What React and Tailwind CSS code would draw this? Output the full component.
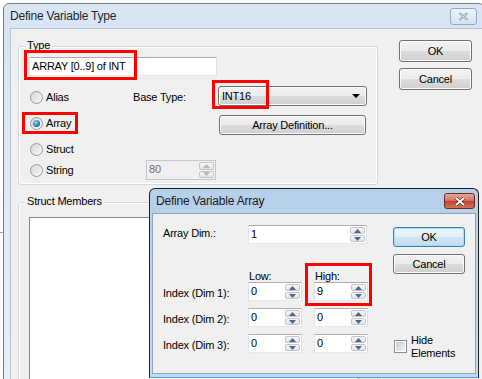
import React from 'react';

const FACE = 'rounded-[3px] border border-[#707070] bg-[linear-gradient(#f2f2f2,#ebebeb_50%,#dddddd_50%,#cfcfcf)] shadow-[inset_0_0_0_1px_#fbfbfb]';
const BTN = `flex items-center justify-center ${FACE}`;
const BTN_DEFAULT = 'flex items-center justify-center rounded-[3px] border border-[#3c7fb1] bg-[linear-gradient(#edf5fb,#e2eef7_50%,#d2e4f1_50%,#c5dbec)] shadow-[inset_0_0_0_1px_#a9dcf7]';
const TEXTBOX = 'border border-[#abadb3] border-l-[#e2e3ea] border-r-[#dbdfe6] border-b-[#e3e9ef] bg-white';
const RED = 'absolute border-[3px] border-[#ff0000] pointer-events-none';

const Tri = ({ up, color, w = 7, h = 4 }) => (
    <svg width={w} height={h} viewBox={`0 0 ${w} ${h}`}>
        <path d={up ? `M0 ${h} L${w / 2} 0 L${w} ${h} Z` : `M0 0 L${w} 0 L${w / 2} ${h} Z`} fill={color} />
    </svg>
);

const Spin = ({ className = '', value, disabled }) => (
    <div className={`flex h-[19px] ${disabled ? 'border border-[#c4c7cb] bg-[#f0f0f0] text-[#6d6d6d]' : TEXTBOX} ${className}`}>
        <div className="flex-1 pl-[2px] leading-[17px]">{value}</div>
        <div className="w-[16px] flex flex-col gap-px py-px pr-px">
            <div className="flex-1 flex items-center justify-center rounded-[2px] border border-[#c3c6cb] bg-linear-to-b from-[#f7f7f7] to-[#e0e3e7]">
                <Tri up color={disabled ? '#b8b8b8' : '#4e6591'} />
            </div>
            <div className="flex-1 flex items-center justify-center rounded-[2px] border border-[#c3c6cb] bg-linear-to-b from-[#f7f7f7] to-[#e0e3e7]">
                <Tri color={disabled ? '#b8b8b8' : '#4e6591'} />
            </div>
        </div>
    </div>
);

const Radio = ({ checked, label }) => (
    <div className="flex items-center gap-[3px]">
        <span className="w-[13px] h-[13px] rounded-full border border-[#9a9a9a] bg-linear-to-br from-[#d6d6d6] to-[#fafafa] flex items-center justify-center">
            {checked && <span className="w-[7px] h-[7px] rounded-full bg-[radial-gradient(circle_at_40%_35%,#8fdcff,#1c64a8_70%)]" />}
        </span>
        <span>{label}</span>
    </div>
);

const Group = ({ title, className = '', children }) => (
    <div className={`relative border border-[#cfd9e0] rounded-[3px] shadow-[inset_0_0_0_1px_#ffffff] ${className}`}>
        <span className="absolute left-[6px] -top-[8px] px-[2px] bg-[#f0f0f0] leading-[13px]">{title}</span>
        {children}
    </div>
);

export default function App() {
    return (
        <div className="relative w-[482px] h-[379px] overflow-hidden bg-white font-['Liberation_Sans',sans-serif] text-[11px] leading-[13px] tracking-[-0.2px] text-black">
            {/* app behind */}
            <div className="absolute left-0 top-[232px] w-[3px] h-px bg-[#a0a0a0]" />

            {/* Define Variable Type */}
            <div className="absolute left-[3px] top-[3px] w-[482px] h-[400px] flex flex-col border border-[#7a7a7a] rounded-t-[6px] bg-linear-to-b from-[#d9e5f3] to-[#e9eef4]">
                <div className="h-[24px] flex items-center pl-[6px] pr-[7px]">
                    <span className="text-[12px] text-[#252525]">Define Variable Type</span>
                    <div className="ml-auto w-[27px] h-[17px] rounded-[3px] border border-[#97a9c0] bg-linear-to-b from-[#eef3f9] to-[#d7e2ef] flex items-center justify-center">
                        <svg width="11" height="9" viewBox="0 0 11 9">
                            <path d="M1.5 1 L9.5 8 M9.5 1 L1.5 8" stroke="#8d96a3" strokeWidth="2.2" />
                            <path d="M1.5 1 L9.5 8 M9.5 1 L1.5 8" stroke="#f6f8fb" strokeWidth="0.8" />
                        </svg>
                    </div>
                </div>

                <div className="flex-1 ml-[6px] flex border-l border-t border-[#b4c2d3] bg-[#f0f0f0]">
                    <div className="ml-[7px] pt-[17px] w-[360px] flex flex-col">
                        <Group title="Type" className="h-[139px] pl-[11px]">
                            <div className={`mt-[10px] -ml-[1px] w-[188px] h-[19px] pl-[2px] leading-[17px] ${TEXTBOX}`}>ARRAY [0..9] of INT</div>

                            <div className="mt-[10px] h-[20px] flex items-center">
                                <div className="w-[103px] pt-[2px]"><Radio label="Alias" /></div>
                                <div className="w-[85px] pt-[2px]">Base Type:</div>
                                <div className={`w-[149px] h-[20px] pl-[3px] pr-[6px] flex items-center justify-between ${FACE}`}>
                                    <span>INT16</span>
                                    <Tri color="#000" w={8} h={4} />
                                </div>
                            </div>

                            <div className="mt-[9px] h-[20px] flex items-center">
                                <div className="w-[103px] -mt-[3px]"><Radio checked label="Array" /></div>
                                <div className={`ml-[86px] w-[147px] h-[20px] ${BTN}`}>Array Definition...</div>
                            </div>

                            <div className="mt-[4px] h-[20px] flex items-center">
                                <Radio label="Struct" />
                            </div>

                            <div className="mt-[1px] h-[20px] flex items-center">
                                <div className="w-[103px]"><Radio label="String" /></div>
                                <Spin className="ml-[13px] w-[70px] h-[20px]" value="80" disabled />
                            </div>

                            <div className={`${RED} left-[5px] top-[3px] w-[113px] h-[30px]`} />
                            <div className={`${RED} left-[193px] top-[33px] w-[57px] h-[29px]`} />
                            <div className={`${RED} left-[3px] top-[65px] w-[56px] h-[22px]`} />
                        </Group>

                        <Group title="Struct Members" className="mt-[17px] h-[200px] pl-[10px] pt-[14px]">
                            <div className="w-[330px] h-[200px] border border-[#828790] bg-white" />
                        </Group>
                    </div>

                    <div className="ml-[21px] pt-[11px] flex flex-col gap-[6px]">
                        <div className={`w-[73px] h-[22px] ${BTN}`}>OK</div>
                        <div className={`w-[73px] h-[22px] ${BTN}`}>Cancel</div>
                    </div>
                </div>
            </div>

            {/* Define Variable Array */}
            <div className="absolute left-[149px] top-[188px] w-[330px] h-[190px] flex flex-col border border-[#1f1f1f] border-b-[#35a7df] rounded-t-[6px] bg-linear-to-b from-[#b6cfea] to-[#c7daef]">
                <div className="h-[24px] flex items-center pl-[6px] pr-[3px]">
                    <span className="text-[12px] text-[#1b1b1b]">Define Variable Array</span>
                    <div className="ml-auto w-[31px] h-[16px] rounded-[3px] border border-[#6a2a20] bg-[linear-gradient(#e9a99a,#d46f5a_50%,#c0402a_50%,#d3735c)] flex items-center justify-center">
                        <svg width="12" height="9" viewBox="0 0 12 9">
                            <path d="M2 1 L10 8 M10 1 L2 8" stroke="#5a1f17" strokeWidth="3" />
                            <path d="M2 1 L10 8 M10 1 L2 8" stroke="#ffffff" strokeWidth="1.8" />
                        </svg>
                    </div>
                </div>

                <div className="relative flex-1 ml-[2px] mr-[2px] mb-[3px] flex border border-[#8fa3ba] bg-[#f0f0f0]">
                    <div className="pl-[10px] flex flex-col w-[215px]">
                        <div className="mt-[11px] h-[19px] flex items-center">
                            <span className="w-[85px] -mt-[3px]">Array Dim.:</span>
                            <Spin className="w-[119px]" value="1" />
                        </div>

                        <div className="mt-[26px] h-[12px] flex items-center">
                            <span className="w-[86px]" />
                            <span className="w-[66px]">Low:</span>
                            <span>High:</span>
                        </div>

                        {[['1', '9'], ['2', '0'], ['3', '0']].map(([d, hi], i) => (
                            <div key={d} className={`${i === 0 ? 'mt-0' : 'mt-[7px]'} h-[19px] flex items-center`}>
                                <span className="w-[85px] pt-[3px]">Index (Dim {d}):</span>
                                <Spin className="w-[54px]" value="0" />
                                <Spin className="ml-[12px] w-[54px]" value={hi} />
                            </div>
                        ))}
                    </div>

                    <div className="ml-[25px] flex flex-col">
                        <div className={`mt-[13px] w-[72px] h-[20px] ${BTN_DEFAULT}`}>OK</div>
                        <div className={`mt-[7px] w-[72px] h-[20px] ${BTN}`}>Cancel</div>
                        <div className="mt-[60px] ml-[1px] flex items-start gap-[4px]">
                            <span className="mt-[6px] w-[13px] h-[13px] border border-[#8f8f8f] bg-white flex items-center justify-center">
                                <span className="w-[9px] h-[9px] bg-linear-to-br from-[#c6cbd2] to-[#f4f5f7]" />
                            </span>
                            <span className="leading-[13px]">Hide<br />Elements</span>
                        </div>
                    </div>

                    <div className={`${RED} left-[152px] top-[49px] w-[67px] h-[43px]`} />
                </div>
            </div>
        </div>
    );
}
